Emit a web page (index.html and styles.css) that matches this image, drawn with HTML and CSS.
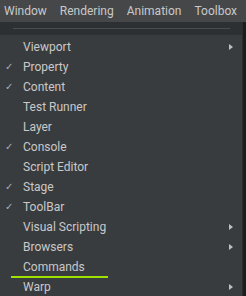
FILE: index.html
```html
<!DOCTYPE html>
<html lang="en">
<head>
  <meta charset="UTF-8">
  <title>Window menu</title>
  <link rel="stylesheet" href="styles.css">
</head>
<body>
  <div class="menubar">
    <span>Window</span>
    <span>Rendering</span>
    <span>Animation</span>
    <span>Toolbox</span>
  </div>
  <div class="frame">
    <div class="menu">
      <div class="sep-top"><div class="sep-line"></div></div>
      <ul class="items">
        <li class="sub">Viewport</li>
        <li class="on">Property</li>
        <li class="on">Content</li>
        <li>Test Runner</li>
        <li>Layer</li>
        <li class="on">Console</li>
        <li>Script Editor</li>
        <li class="on">Stage</li>
        <li class="on">ToolBar</li>
        <li class="sub">Visual Scripting</li>
        <li class="sub">Browsers</li>
        <li class="hl">Commands</li>
        <li class="sub">Warp</li>
      </ul>
    </div>
    <div class="edge"></div>
  </div>
</body>
</html>
```

FILE: styles.css
```css
body { margin: 0; background: #393c3f; font-family: Roboto, "Liberation Sans", sans-serif; font-size: 12px; color: #c9c9c9; overflow: hidden; }
.menubar { height: 22px; background: #454749; display: flex; align-items: center; gap: 13px; padding-left: 4px; white-space: nowrap; }
.frame { display: flex; }
.menu { flex: 1; }
.edge { width: 3px; background: #1b1d1f; border-left: 1px solid #2a2c2e; }
.sep-top { height: 13px; background: #2d3033; padding: 6px 12px 0 13px; box-sizing: border-box; }
.sep-line { height: 1px; background: #4a4d50; }
.items { list-style: none; margin: 0; padding: 2px 0 0; }
.items li { height: 20px; line-height: 20px; padding-left: 23px; position: relative; }
.items li.on::before { content: "\2713"; position: absolute; left: 5px; top: 0; font-family: "DejaVu Sans", sans-serif; font-size: 10px; color: #adadad; }
.items li.sub::after { content: ""; position: absolute; right: 9px; top: 7px; border-left: 4px solid #c0c0c0; border-top: 3px solid transparent; border-bottom: 3px solid transparent; }
.items li.hl::after { content: ""; position: absolute; left: 11px; width: 97px; bottom: -1px; height: 2px; background: #9ee000; }
```
